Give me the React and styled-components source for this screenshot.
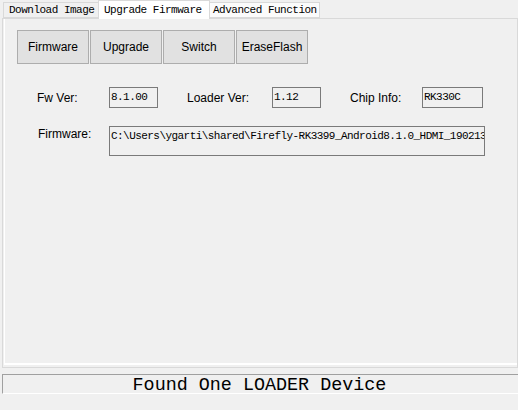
import React from 'react';
import styled, { createGlobalStyle } from 'styled-components';

const GlobalStyle = createGlobalStyle`
  html, body {
    margin: 0;
    padding: 0;
    background-color: #f0f0f0;
  }
`;

const Window = styled.div`
  width: 518px;
  height: 410px;
  display: flex;
  flex-direction: column;
  background-color: #f0f0f0;
  overflow: hidden;
  font-family: "Liberation Sans", Arial, sans-serif;
`;

const TabBar = styled.div`
  display: flex;
  align-items: flex-end;
  height: 18px;
  padding-left: 4px;
`;

const Tab = styled.div`
  box-sizing: border-box;
  width: ${props => props.$width}px;
  height: ${props => (props.$active ? '19px' : '16px')};
  margin-bottom: ${props => (props.$active ? '-1px' : '0')};
  padding-left: ${props => props.$pad || 5}px;
  display: flex;
  align-items: center;
  border: 1px solid #d9d9d9;
  border-bottom: ${props => (props.$active ? 'none' : '1px solid #d9d9d9')};
  margin-left: -1px;
  background-color: ${props => (props.$active ? '#ffffff' : props.$light ? '#fbfbfb' : '#f0f0f0')};
  font-family: "Liberation Mono", "DejaVu Sans Mono", monospace;
  font-size: 11px;
  letter-spacing: -0.5px;
  color: #000;
  white-space: nowrap;
  position: relative;
  z-index: ${props => (props.$active ? 1 : 0)};
`;

const Panel = styled.div`
  box-sizing: border-box;
  height: 350px;
  margin: 0 0 0 2px;
  border: 1px solid #d9d9d9;
  display: flex;
`;

const PanelBody = styled.div`
  flex: 1;
  margin: 0 0 2px 1px;
  border-left: 1px solid #ffffff;
  border-bottom: 2px solid #ffffff;
  padding: 11px 0 0 12px;
  display: flex;
  flex-direction: column;
`;

const ButtonRow = styled.div`
  display: flex;
  gap: 1px;
`;

const Button = styled.button`
  box-sizing: border-box;
  width: 72px;
  height: 34px;
  padding: 0;
  background-color: #e1e1e1;
  border: 1px solid #adadad;
  font-family: "Liberation Sans", Arial, sans-serif;
  font-size: 12px;
  color: #000;
`;

const FieldRow = styled.div`
  display: flex;
  align-items: ${props => props.$align || 'center'};
  margin-top: ${props => props.$top}px;
  padding-left: ${props => props.$left}px;
`;

const Label = styled.span`
  width: ${props => props.$width}px;
  margin-left: ${props => props.$gap || 0}px;
  padding-top: ${props => props.$padTop || 0}px;
  font-size: 12px;
  color: #000;
  flex-shrink: 0;
`;

const Field = styled.div`
  box-sizing: border-box;
  width: ${props => props.$width}px;
  height: ${props => props.$height || 21}px;
  padding: 2px 1px;
  border: 1px solid #7a7a7a;
  background-color: #f0f0f0;
  font-family: "Liberation Mono", "DejaVu Sans Mono", monospace;
  font-size: 11px;
  letter-spacing: -0.55px;
  line-height: 14px;
  white-space: nowrap;
  overflow: hidden;
  color: #000;
  flex-shrink: 0;
`;

const StatusBar = styled.div`
  box-sizing: border-box;
  height: 20px;
  margin: 6px 0 0 2px;
  padding: 2px 2px 0 0;
  border-top: 1px solid #a0a0a0;
  border-left: 1px solid #a0a0a0;
  border-bottom: 1px solid #ffffff;
  display: flex;
  justify-content: center;
  align-items: center;
  font-family: "Liberation Mono", "DejaVu Sans Mono", monospace;
  font-size: 18.4px;
  color: #000;
`;

export default function App() {
  return (
    <Window>
      <GlobalStyle />
      <TabBar>
        <Tab $width={96} $pad={5}>Download Image</Tab>
        <Tab $active $width={112} $pad={5}>Upgrade Firmware</Tab>
        <Tab $light $width={111} $pad={3}>Advanced Function</Tab>
      </TabBar>
      <Panel>
        <PanelBody>
          <ButtonRow>
            <Button>Firmware</Button>
            <Button>Upgrade</Button>
            <Button>Switch</Button>
            <Button>EraseFlash</Button>
          </ButtonRow>
          <FieldRow $top={23} $left={20}>
            <Label $width={72}>Fw Ver:</Label>
            <Field $width={49}>8.1.00</Field>
            <Label $width={85} $gap={29}>Loader Ver:</Label>
            <Field $width={49}>1.12</Field>
            <Label $width={72} $gap={29}>Chip Info:</Label>
            <Field $width={61}>RK330C</Field>
          </FieldRow>
          <FieldRow $top={18} $left={21} $align="flex-start">
            <Label $width={71} $padTop={1}>Firmware:</Label>
            <Field $width={376} $height={30}>
              C:\Users\ygarti\shared\Firefly-RK3399_Android8.1.0_HDMI_190213
            </Field>
          </FieldRow>
        </PanelBody>
      </Panel>
      <StatusBar>Found One LOADER Device</StatusBar>
    </Window>
  );
}
